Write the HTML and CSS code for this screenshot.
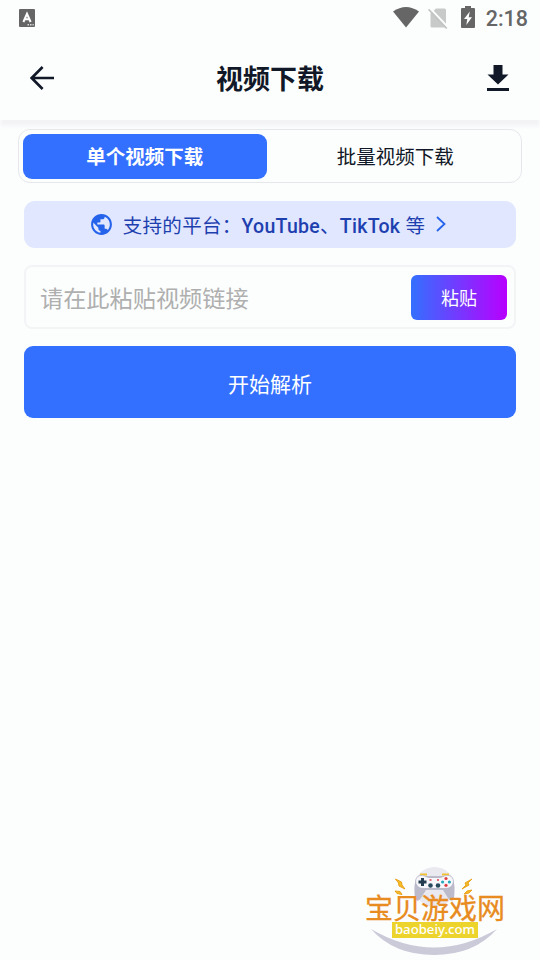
FILE: index.html
```
<!DOCTYPE html>
<html lang="zh-CN">
<head>
  <meta charset="UTF-8">
  <meta name="viewport" content="width=device-width, initial-scale=1.0">
  <title>视频下载</title>
  <link rel="stylesheet" href="styles.css">
</head>
<body>
  <div class="statusbar">
    <svg class="status-app" width="16" height="18" viewBox="0 0 16 18">
      <rect width="16" height="18" rx="1" fill="#666"/>
      <path d="M4.4 13 L8 4.8 L11.6 13 M5.8 10.3 H10.2" fill="none" stroke="#fff" stroke-width="2"/>
      <path d="M8.5 15.8h1.5M11 15.8h1.5M13.5 15.8h1.2" stroke="#ddd" stroke-width="1.4"/>
    </svg>
    <div class="status-icons">
      <svg width="26" height="21" viewBox="0 0 26 21"><path d="M0 4.5 Q13 -4.5 26 4.5 L13 20.5z" fill="#666"/></svg>
      <svg class="sim" width="20" height="21" viewBox="0 0 20 21">
        <path d="M8 .5h8.500a1.500 1.500 0 0 1 1.500 1.500v16a1.500 1.500 0 0 1-1.500 1.500H4a1.500 1.500 0 0 1-1.500-1.500V5.500z" fill="#c8c9c9"/>
        <path d="M2 .3 20 19.200" stroke="#fcfefe" stroke-width="2"/>
        <path d="M.6 1.400 18.800 20.600" stroke="#c3c4c4" stroke-width="1.600"/>
      </svg>
      <svg class="battery" width="14" height="22" viewBox="0 0 14 22">
        <path d="M4 0h6v2h3a1 1 0 0 1 1 1v18a1 1 0 0 1-1 1H1a1 1 0 0 1-1-1V3a1 1 0 0 1 1-1h3z" fill="#666"/>
        <path d="M8.800 5.500 3 13h3.300L5.300 19 11 11.200H7.700z" fill="#fff"/>
      </svg>
      <span class="time">2:18</span>
    </div>
  </div>

  <header class="header">
    <svg width="24" height="24" viewBox="0 0 24 24" fill="none" stroke="#111827" stroke-width="2.600"><path d="M24 12H2M12.600 1 1.700 12l10.900 11"/></svg>
    <h1>视频下载</h1>
    <svg width="22" height="26" viewBox="0 0 22 26" fill="#111827"><path d="M6.500 0h9v9.500h6L11 19.500.5 9.500h6zM0 23h22v3H0z"/></svg>
  </header>

  <main class="content">
    <div class="tabs">
      <div class="tab active">单个视频下载</div>
      <div class="tab">批量视频下载</div>
    </div>

    <div class="platforms">
      <svg width="25" height="25" viewBox="0 0 24 24" fill="#2563eb"><path d="M12 2C6.480 2 2 6.480 2 12s4.480 10 10 10 10-4.480 10-10S17.520 2 12 2zm-1 17.930c-3.950-.49-7-3.850-7-7.930 0-.62.080-1.210.210-1.790L9 15v1c0 1.100.9 2 2 2v1.930zm6.900-2.540c-.26-.81-1-1.390-1.900-1.390h-1v-3c0-.55-.45-1-1-1H8v-2h2c.55 0 1-.45 1-1V7h2c1.100 0 2-.9 2-2v-.41c2.930 1.190 5 4.060 5 7.410 0 2.080-.8 3.970-2.100 5.390z"/></svg>
      <span class="platforms-text">支持的平台：<b>YouTube</b>、<b>TikTok</b> 等</span>
      <svg class="chevron" width="10" height="16" viewBox="0 0 10 16" fill="none" stroke="#2563eb" stroke-width="1.800"><path d="M1 1l7.500 7L1 15"/></svg>
    </div>

    <div class="link-box">
      <input class="link-input" type="text" placeholder="请在此粘贴视频链接">
      <button class="paste">粘贴</button>
    </div>

    <button class="parse">开始解析</button>
  </main>

  <div class="watermark">
    <svg class="watermark-art" width="160" height="100" viewBox="0 0 160 100">
      <circle cx="79.500" cy="27" r="20" fill="#e9e9ef"/>
      <path d="M16 69 Q79 106 142 69 Q119 95 79 95 Q39 95 16 69z" fill="#cacad8"/>
      <path d="M65 14.500h7M87 14.500h7" stroke="#f2c230" stroke-width="2"/>
      <path d="M63 16h33c4 5 4 15 3 22-1 4-4 3-6 0l-5-8H71l-5 8c-2 3-5 4-6 0-1-7-1-17 3-22z" fill="#bbbbcc"/>
      <path d="M65 15.500c4-1 6 2 9 2h11c3 0 5-3 9-2 4 1 5 5 4 8-1 4-5 5-8 5H69c-3 0-7-1-8-5-1-3 0-7 4-8z" fill="#f6f6fb" stroke="#a4a4b8" stroke-width=".6"/>
      <path d="M67.500 18v8M63.500 22h8" stroke="#233c50" stroke-width="3"/>
      <circle cx="75.500" cy="25.500" r="2.300" fill="#294a5d"/><circle cx="83" cy="25.500" r="2.300" fill="#294a5d"/>
      <path d="M74.500 20h2M82 20h2" stroke="#df3e45" stroke-width="1.500"/>
      <circle cx="91" cy="18.500" r="1.600" fill="#df3e45"/><circle cx="91" cy="25.300" r="1.600" fill="#df3e45"/>
      <circle cx="87.600" cy="22" r="1.600" fill="#27a8bd"/><circle cx="94.400" cy="22" r="1.600" fill="#27a8bd"/>
      <path d="M40.500 19l6 3 .5 3 3 4-6-3-.5-3zM117 19l-7 4 1 2-4 4 7-4-1-2zM40 31l5 .5 2 3-5-1zM117 30l-5 1-3 3 5-1z" fill="#f6bd25" stroke="#e9a31e"/>
    </svg>
    <div class="watermark-name">宝贝游戏网</div>
    <div class="watermark-site">baobeiy.com</div>
  </div>
</body>
</html>
```
FILE: styles.css
```
* { box-sizing: border-box; }
body { margin: 0; min-height: 960px; background: #fcfefe; color: #111827; font-family: Roboto, "Noto Sans CJK SC", sans-serif; position: relative; overflow: hidden; }
svg { display: block; flex: none; }
button { border: none; padding: 0; color: #fff; font-family: inherit; cursor: pointer; }

.statusbar { height: 36px; padding: 0 12px 0 19px; display: flex; align-items: center; justify-content: space-between; }
.status-icons { display: flex; align-items: center; }
.status-icons svg { margin-top: -2px; }
.status-icons .sim { margin-left: 9px; margin-top: 0; }
.status-icons .battery { margin-left: 13px; }
.time { margin-left: 11px; padding-top: 2px; font-size: 21.5px; line-height: 34px; font-weight: 500; color: #666; }

.header { height: 84px; padding: 0 31px 0 30px; display: flex; align-items: center; justify-content: space-between; box-shadow: 0 6px 4px #f3f3f6; }
.header h1 { margin: 4px 1px 0 0; font-size: 27px; line-height: 40px; font-weight: 700; }
.header svg { margin-bottom: 1px; }

.content { padding: 9px 18px 0; position: relative; }
.tabs { height: 54px; padding: 3.5px; display: flex; background: #fcfefe; border: 1px solid #e5e7eb; border-radius: 12px; }
.tab { width: 244.5px; padding-bottom: 2px; display: flex; align-items: center; justify-content: center; border-radius: 9px; font-size: 19.5px; }
.tab + .tab { flex: 1; padding-left: 6px; }
.tab.active { background: #3370ff; color: #fff; font-weight: 700; }

.platforms { height: 46.5px; margin: 18px 6px 0; padding-right: 5px; display: flex; align-items: center; justify-content: center; background: #e0e7ff; border-radius: 11px; color: #1e40af; }
.platforms-text { margin: 5px 11px 0 9px; font-size: 19.5px; line-height: 30px; letter-spacing: 0.28px; white-space: nowrap; }
.platforms-text b { font-weight: 500; }

.link-box { height: 64px; margin: 17.5px 6px 0; padding: 0 7px 0 14px; display: flex; align-items: center; border: 2px solid #f3f4f6; border-radius: 8px; }
.link-input { flex: 1; min-width: 0; padding: 4px 0 0; border: none; outline: none; background: none; font-family: inherit; font-size: 23.2px; }
.link-input::placeholder { color: #afafaf; }
.paste { width: 96px; height: 45px; border-radius: 6px; background: linear-gradient(90deg, #3370ff, #b800ff); font-size: 18px; }
.parse { display: block; width: 492px; height: 72px; margin: 17px 6px 0; padding-top: 1px; background: #3370ff; border-radius: 9px; font-size: 21px; }

.watermark { position: absolute; left: 355px; top: 860px; width: 160px; height: 100px; display: flex; flex-direction: column; align-items: center; }
.watermark-art { position: absolute; left: 0; top: 0; }
.watermark-name { position: relative; margin-top: 37px; font-size: 28px; line-height: 25px; color: #e88b20; -webkit-text-stroke: 0.3px #e88b20; white-space: nowrap; }
.watermark-site { position: relative; width: 86px; height: 16px; background: #ecd42d; color: #fff; font: 500 13.2px/15px "Noto Sans", sans-serif; text-align: center; }
```
